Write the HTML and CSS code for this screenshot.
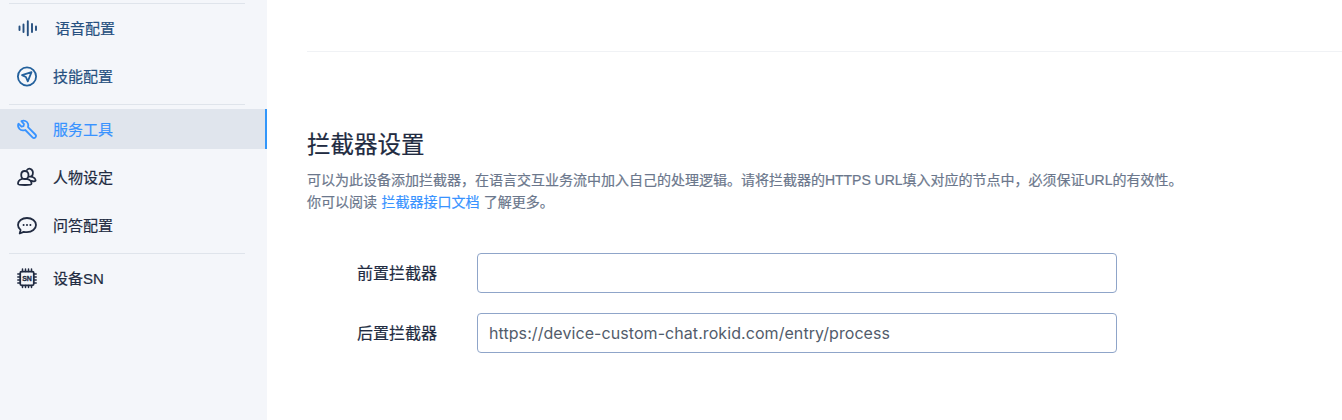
FILE: index.html
```html
<!DOCTYPE html>
<html lang="zh-CN">
<head>
<meta charset="utf-8">
<title>拦截器设置</title>
<link rel="stylesheet" href="styles.css">
</head>
<body>
<div class="layout">
  <nav class="sidebar">
    <div class="group">
      <a class="item item-blue item-voice">
        <svg class="icon" viewBox="0 0 20 20"><path d="M2.500 8.500v3.500M6.500 6.500v7.500M10.800 3.200v14M15 6v8M19 8.500v3.500" stroke-width="1.900"/></svg>
        <span class="name">语音配置</span>
      </a>
      <a class="item item-blue">
        <svg class="icon" viewBox="0 0 20 20"><circle cx="10" cy="10.500" r="9.100"/><path d="M14.500 6.100L5 9.100l3.900 1.900 1.900 4.300z"/></svg>
        <span class="name">技能配置</span>
      </a>
    </div>
    <div class="group">
      <a class="item item-active">
        <svg class="icon" viewBox="0 -.7 20 20"><path d="M4.400 1.400C7 .4 10 1.300 11 4c.5 1.300.3 2.400 0 3.400l7.300 7.400c.9.9.9 2 .1 2.900-.9.900-2 .9-2.900 0L8.300 10.300c-2.300.8-4.600.4-6-1.300C.9 7.400.8 5.500 1.500 4l3 2.900 2-.5.500-2z"/></svg>
        <span class="name">服务工具</span>
      </a>
      <a class="item">
        <svg class="icon" viewBox="0 0 20 20"><path d="M7.800 4C5.500 4 4.200 5.700 4.200 7.900c0 2.300 1.300 4.100 3.600 4.100s3.700-1.800 3.700-4.100C11.500 5.700 10.100 4 7.800 4zM5 12C2.500 12.700 1 14.400 1 16.700c0 1 5 1.300 7 1.300s6.500-.1 6.500-1.300c0-2.200-1.600-3.900-4.100-4.500"/><path d="M10 3c.8-1 1.900-1.500 3.100-1.200 2.200.5 3.200 3 2.700 5.200-.2.900-.7 1.900-1.300 2.500 2.500.9 4.100 2.300 4.100 4.200-.7.700-2.100.8-4.200.1"/><path d="M12.800 9.600l1.700-.1"/></svg>
        <span class="name">人物设定</span>
      </a>
      <a class="item">
        <svg class="icon" viewBox="0 0 20 20"><path d="M10 3c-5 0-9 3-9 7 0 2 1 3.700 2.600 4.900L2.700 18.500l4-1.700c1 .2 2.100.3 3.300.3 5 0 9-3.100 9-7.100s-4-7-9-7z"/><path d="M6.500 10h.2M9.900 10h.2M13.300 10h.2"/></svg>
        <span class="name">问答配置</span>
      </a>
    </div>
    <div class="group">
      <a class="item">
        <svg class="icon" viewBox="0 0 20 20"><rect x="3.200" y="3.700" width="13.600" height="13.600" rx="1.500"/><path d="M5.500 3.500V1M8.500 3.500V1M11.500 3.500V1M14.500 3.500V1M5.500 17.500v2M8.500 17.500v2M11.500 17.500v2M14.500 17.500v2M3 6H.8M3 9H.8M3 12H.8M3 15H.8M17 6h2.200M17 9h2.200M17 12h2.200M17 15h2.200" stroke-width="1.500"/><text class="chip" x="10" y="13" text-anchor="middle">SN</text></svg>
        <span class="name">设备SN</span>
      </a>
    </div>
  </nav>
  <main class="content">
    <hr class="rule">
    <h1 class="title">拦截器设置</h1>
    <p class="desc"><span class="sentence">可以为此设备添加拦截器，在语言交互业务流中加入自己的处理逻辑。请将拦截器的<span class="latin">HTTPS URL</span>填入对应的节点中，必须保证<span class="latin">URL</span>的有效性。</span><br>你可以阅读 <a class="link">拦截器接口文档</a> 了解更多。</p>
    <form class="form">
      <label class="field"><span class="label">前置拦截器</span><input class="input" type="text"></label>
      <label class="field"><span class="label">后置拦截器</span><input class="input" type="text" value="https://device-custom-chat.rokid.com/entry/process"></label>
    </form>
  </main>
</div>
</body>
</html>
```
FILE: styles.css
```css
body {
  margin: 0;
  background: #fff;
  color: #212b41;
  font-family: "Liberation Sans", "Noto Sans CJK SC", sans-serif;
  -webkit-text-stroke: .2px currentColor;
}
.layout {
  display: flex;
  height: 420px;
  overflow: hidden;
}
.sidebar {
  width: 267px;
  flex: none;
  box-sizing: border-box;
  padding-top: 3px;
  background: #f4f6fa;
}
.group {
  display: flex;
  flex-direction: column;
  gap: 8px;
  padding-bottom: 8px;
}
.group::before {
  content: "";
  height: 1px;
  margin: 0 22px -4px 9px;
  background: #dfe4eb;
}
.item {
  display: flex;
  align-items: center;
  gap: 16px;
  height: 40px;
  box-sizing: border-box;
  padding-left: 17px;
  font-size: 15px;
  line-height: 20px;
}
.name {
  padding-top: 2px;
}
.item-blue {
  color: #265080;
}
.item-blue .icon {
  color: #22609c;
}
.item-voice {
  gap: 18px;
}
.item-voice .icon {
  color: #265080;
}
.item-active {
  border-right: 2px solid #3296fa;
  background: #e0e5ed;
  color: #3893ff;
}
.icon {
  width: 20px;
  height: 20px;
  flex: none;
  overflow: visible;
  fill: none;
  stroke: currentColor;
  stroke-width: 1.8;
  stroke-linecap: round;
  stroke-linejoin: round;
}
.chip {
  fill: currentColor;
  stroke: currentColor;
  stroke-width: .3;
  font: bold 7px "Liberation Sans", sans-serif;
}
.content {
  flex: 1;
  padding-left: 40px;
}
.rule {
  height: 1px;
  margin: 51px 0 0;
  border: 0;
  background: #f0f2f5;
}
.title {
  margin: 75px 0 0;
  font-size: 23.5px;
  font-weight: 400;
  line-height: 36px;
}
.desc {
  margin: 6px 0 0;
  color: #6b778c;
  font-size: 14px;
  line-height: 22px;
}
.sentence {
  white-space: nowrap;
}
.latin {
  letter-spacing: -.03px;
}
.link {
  margin: 0 .5px;
  color: #3893ff;
}
.form {
  display: flex;
  flex-direction: column;
  gap: 20px;
  margin-top: 40px;
}
.field {
  display: flex;
  align-items: center;
  padding-left: 50px;
}
.label {
  width: 120px;
  padding-bottom: 2px;
  font-size: 16px;
}
.input {
  width: 640px;
  height: 40px;
  box-sizing: border-box;
  padding: 0 11px 1px;
  border: 1px solid #8fa5c9;
  border-radius: 4px;
  background: #fff;
  color: #525c6b;
  font: 16px Inter, "Liberation Sans", sans-serif;
  letter-spacing: .07px;
  -webkit-text-stroke: 0;
}
```
